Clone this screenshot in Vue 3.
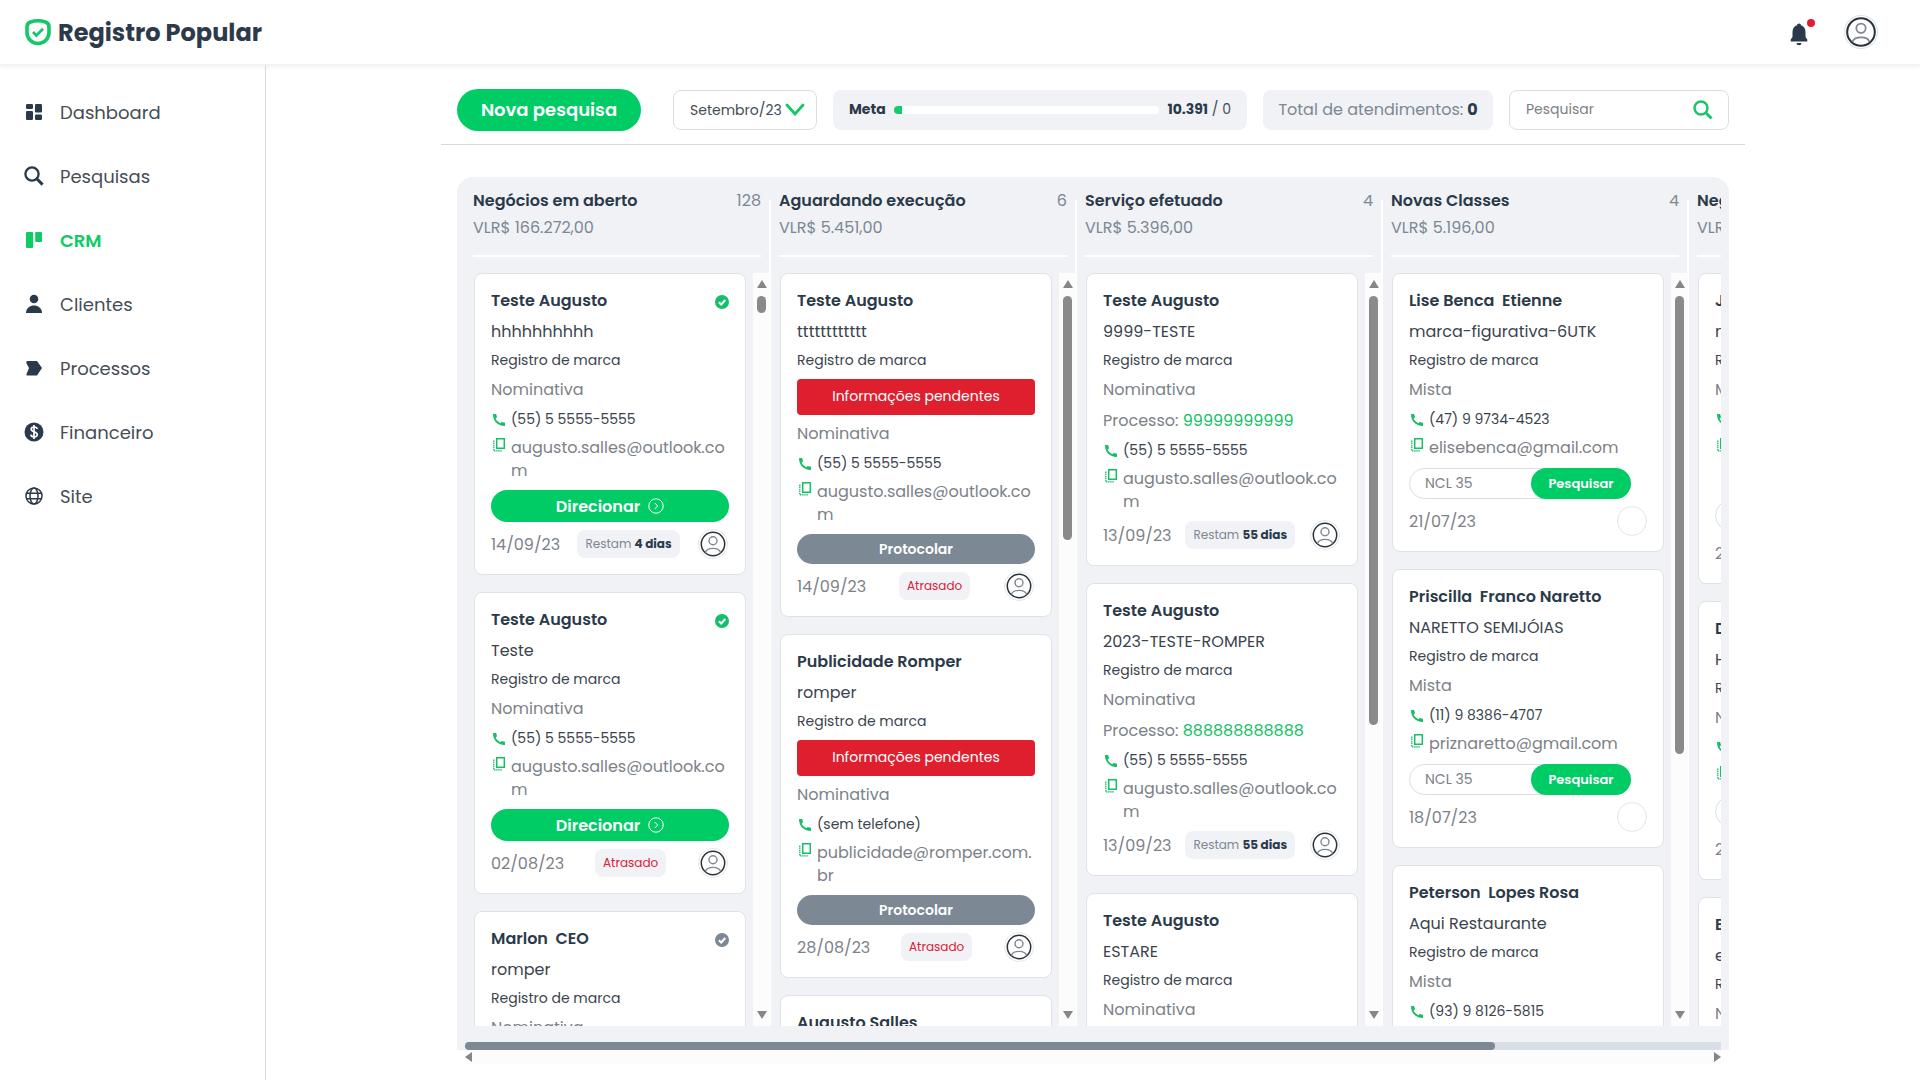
<script setup>
const menu = [
  { label: 'Dashboard', icon: 'dashboard' },
  { label: 'Pesquisas', icon: 'search' },
  { label: 'CRM', icon: 'board', active: true },
  { label: 'Clientes', icon: 'person' },
  { label: 'Processos', icon: 'tag' },
  { label: 'Financeiro', icon: 'money' },
  { label: 'Site', icon: 'globe' }
]

const augusto = { name: 'Teste Augusto', phone: '(55) 5 5555-5555', email: 'augusto.salles@outlook.com', kind: 'Nominativa', avatar: true }

const columns = [
  {
    title: 'Negócios em aberto', count: 128, total: '166.272,00', thumb: 17,
    cards: [
      { ...augusto, brand: 'hhhhhhhhhh', check: 'on', action: 'Direcionar', date: '14/09/23', left: '4 dias' },
      { ...augusto, brand: 'Teste', check: 'on', action: 'Direcionar', date: '02/08/23', late: true },
      { name: 'Marlon\u00a0 CEO', brand: 'romper', check: 'off', kind: 'Nominativa', phone: '', email: '' }
    ]
  },
  {
    title: 'Aguardando execução', count: 6, total: '5.451,00', thumb: 244,
    cards: [
      { ...augusto, brand: 'tttttttttttt', pending: true, action: 'Protocolar', date: '14/09/23', late: true },
      { ...augusto, name: 'Publicidade Romper', brand: 'romper', pending: true, phone: '(sem telefone)', email: 'publicidade@romper.com.br', action: 'Protocolar', date: '28/08/23', late: true },
      { name: 'Augusto Salles', brand: '', kind: '', phone: '', email: '' }
    ]
  },
  {
    title: 'Serviço efetuado', count: 4, total: '5.396,00', thumb: 429,
    cards: [
      { ...augusto, brand: '9999-TESTE', process: '99999999999', date: '13/09/23', left: '55 dias' },
      { ...augusto, brand: '2023-TESTE-ROMPER', process: '888888888888', date: '13/09/23', left: '55 dias' },
      { ...augusto, brand: 'ESTARE', date: '' }
    ]
  },
  {
    title: 'Novas Classes', count: 4, total: '5.196,00', thumb: 458,
    cards: [
      { name: 'Lise Benca\u00a0 Etienne', brand: 'marca-figurativa-6UTK', kind: 'Mista', phone: '(47) 9 9734-4523', email: 'elisebenca@gmail.com', ncl: 'NCL 35', date: '21/07/23' },
      { name: 'Priscilla\u00a0 Franco Naretto', brand: 'NARETTO SEMIJÓIAS', kind: 'Mista', phone: '(11) 9 8386-4707', email: 'priznaretto@gmail.com', ncl: 'NCL 35', date: '18/07/23' },
      { name: 'Peterson\u00a0 Lopes Rosa', brand: 'Aqui Restaurante', kind: 'Mista', phone: '(93) 9 8126-5815', email: '', ncl: 'NCL 35', date: '' }
    ]
  },
  {
    title: 'Negócios', count: '', total: '', thumb: 0,
    cards: [
      { name: 'J', brand: 'm', kind: 'Mista', phone: '', email: '', ncl: '', tall: true, date: '2' },
      { name: 'D', brand: 'H', kind: 'Nominativa', phone: '', email: '', ncl: '', date: '2' },
      { name: 'E', brand: 'e', kind: 'Nominativa', phone: '', email: '', ncl: '', date: '' }
    ]
  }
]
</script>

<template>
  <div class="app">
    <header class="topbar">
      <a class="brand" href="#">
        <svg width="28" height="28" viewBox="0 0 28 28" fill="none" aria-hidden="true">
          <path d="M3 9Q3 5 6.500 4Q14 1.500 21.500 4Q25 5 25 9V14.500A11 11 0 0 1 3 14.500Z" stroke="#16c768" stroke-width="3.600" />
          <path d="M9 14l3.400 3.400 6.600-6.600" stroke="#16c768" stroke-width="2.800" />
        </svg>
        <span>Registro Popular</span>
      </a>
      <div class="account">
        <button class="icon-btn bell" aria-label="Notificações">
          <svg width="18" height="23" viewBox="0 0 18 23" fill="#2a3a4a">
            <path d="M9 0.500C10.200 0.500 10.900 1.300 11 2.300C14 3.200 15.500 5.800 15.500 9V14L17.300 16.500V18.500H0.700V16.500L2.500 14V9C2.500 5.800 4 3.200 7 2.300C7.100 1.300 7.800 0.500 9 0.500Z" />
            <path d="M6.500 20h5a2.500 2.200 0 0 1-5 0Z" />
          </svg>
          <i class="dot"></i>
        </button>
        <button class="icon-btn" aria-label="Minha conta">
          <svg width="34" height="34" viewBox="0 0 32 32" fill="none">
            <circle cx="16" cy="16" r="15.500" fill="#fff" stroke="#dfe3e8" />
            <circle cx="16" cy="16" r="13" stroke="#2a333c" stroke-width="1.900" />
            <circle cx="16" cy="12.500" r="4.400" stroke="#7f8790" stroke-width="1.700" />
            <path d="M8 25.500C9.500 19.500 22.500 19.500 24 25.500" stroke="#7f8790" stroke-width="1.700" />
          </svg>
        </button>
      </div>
    </header>

    <div class="body">
      <nav class="sidebar">
        <a v-for="m in menu" :key="m.label" href="#" class="nav-item" :class="{ active: m.active }">
          <svg width="20" height="20" viewBox="0 0 20 20" fill="currentColor" aria-hidden="true">
            <g v-if="m.icon === 'dashboard'">
              <rect x="2" y="2" width="7" height="5" rx="1.200" /><rect x="11" y="2" width="7" height="8.500" rx="1.200" />
              <rect x="2" y="9" width="7" height="9" rx="1.200" /><rect x="11" y="12.500" width="7" height="5.500" rx="1.200" />
            </g>
            <g v-else-if="m.icon === 'search'" fill="none" stroke="currentColor">
              <circle cx="8" cy="8" r="6.600" stroke-width="2.300" /><path d="M12.800 12.800L18.600 18.600" stroke-width="3" />
            </g>
            <g v-else-if="m.icon === 'board'">
              <rect x="2" y="2" width="7.200" height="16" rx="1.200" /><rect x="11.200" y="2" width="6.800" height="10" rx="1.200" />
            </g>
            <g v-else-if="m.icon === 'person'">
              <circle cx="10" cy="5" r="4.300" /><path d="M2 19C2 9 18 9 18 19Z" />
            </g>
            <path v-else-if="m.icon === 'tag'" d="M3.500 3H13L18 10L13 17.500H3.500Q2 17.500 2.500 16L5 10L2.300 5Q2 3 3.500 3Z" />
            <g v-else-if="m.icon === 'money'">
              <circle cx="10" cy="10" r="9.500" />
              <path d="M13.200 7C12.800 4.300 7.200 4.300 7.200 7.200C7.200 10.200 13.300 9.400 13.300 12.700C13.300 15.700 7.200 15.500 6.800 12.700M10 3V17" fill="none" stroke="#fff" stroke-width="1.700" />
            </g>
            <g v-else fill="none" stroke="currentColor" stroke-width="1.500">
              <circle cx="10" cy="10" r="8" /><ellipse cx="10" cy="10" rx="4" ry="8" /><path d="M2.500 7.300H17.500M2.500 12.700H17.500" />
            </g>
          </svg>
          <span>{{ m.label }}</span>
        </a>
      </nav>

      <main class="main">
        <div class="toolbar">
          <button class="primary">Nova pesquisa</button>
          <label class="month">
            <select aria-label="Mês"><option>Setembro/23</option></select>
            <svg width="20" height="13" viewBox="0 0 20 13" fill="none" stroke="#16c768" stroke-width="2.800" stroke-linecap="round"><path d="M2 2L10 11L18 2" /></svg>
          </label>
          <div class="goal">
            <b>Meta</b>
            <div class="goal-track"><div class="goal-fill"></div></div>
            <span><b>10.391</b> / 0</span>
          </div>
          <div class="total">Total de atendimentos: <b>0</b></div>
          <div class="search">
            <input type="text" placeholder="Pesquisar" aria-label="Pesquisar" />
            <svg width="20" height="20" viewBox="0 0 20 20" fill="none" stroke="#16c768"><circle cx="8" cy="8" r="6.500" stroke-width="2.400" /><path d="M12.800 12.800L18.500 18.500" stroke-width="3" /></svg>
          </div>
        </div>

        <section class="board">
          <div class="columns">
            <section v-for="col in columns" :key="col.title" class="column">
              <div class="col-head">
                <div class="col-title"><h2>{{ col.title }}</h2><span>{{ col.count }}</span></div>
                <div class="col-total">VLR$ {{ col.total }}</div>
              </div>
              <div class="col-body">
                <div class="cards">
                  <article v-for="(c, i) in col.cards" :key="i" class="card">
                    <div class="card-top">
                      <h3>{{ c.name }}</h3>
                      <svg v-if="c.check" width="14" height="14" viewBox="0 0 14 14" :class="c.check">
                        <circle cx="7" cy="7" r="7" fill="currentColor" /><path d="M3.800 7.200L6.200 9.500L10.300 5" fill="none" stroke="#fff" stroke-width="2" />
                      </svg>
                    </div>
                    <p class="name">{{ c.brand }}</p>
                    <p class="service">Registro de marca</p>
                    <div v-if="c.pending" class="pending">Informações pendentes</div>
                    <p class="kind">{{ c.kind }}</p>
                    <p v-if="c.process" class="kind">Processo: <a href="#">{{ c.process }}</a></p>
                    <p class="phone">
                      <svg width="16" height="16" viewBox="0 0 16 16" fill="#16bf66"><path d="M2.300 2H5.200L6 5.300L4.600 6.700Q6 9.700 9.300 11.300L10.700 10L14 10.800V13.700C14 14 13.800 14 13.500 14C7 14 2 9 2 2.500Q2 2 2.300 2Z" /></svg>
                      <span>{{ c.phone }}</span>
                    </p>
                    <p class="email" :class="{ tall: c.tall }">
                      <svg width="16" height="16" viewBox="0 0 16 16" fill="none" stroke="#16bf66"><path d="M5.700 1.700H13.300V11.300H5.700Z" stroke-width="1.500" /><path d="M2.800 3.500V13.800H11" stroke-width="1.300" stroke-dasharray="1.500 .6" /></svg>
                      <span>{{ c.email }}</span>
                    </p>
                    <button v-if="c.action === 'Direcionar'" class="action go">
                      Direcionar
                      <svg width="16" height="16" viewBox="0 0 16 16" fill="none" stroke="#fff"><circle cx="8" cy="8" r="7.200" /><path d="M6.700 5L9.700 8L6.700 11" /></svg>
                    </button>
                    <button v-else-if="c.action" class="action file">{{ c.action }}</button>
                    <div v-if="c.ncl !== undefined" class="ncl">
                      <input type="text" :placeholder="c.ncl" aria-label="Classe NCL" />
                      <button>Pesquisar</button>
                    </div>
                    <div class="card-foot">
                      <span>{{ c.date }}</span>
                      <small v-if="c.left" class="pill">Restam <b>{{ c.left }}</b></small>
                      <small v-if="c.late" class="pill late">Atrasado</small>
                      <svg v-if="c.avatar" class="avatar" width="32" height="32" viewBox="0 0 32 32" fill="none">
                        <circle cx="16" cy="16" r="14.500" stroke="#e3e7eb" />
                        <circle cx="16" cy="16" r="11.700" stroke="#2a333c" stroke-width="1.500" />
                        <circle cx="16" cy="12.800" r="4" stroke="#7f8790" stroke-width="1.400" />
                        <path d="M8.500 24.500C10 19 22 19 23.500 24.500" stroke="#7f8790" stroke-width="1.400" />
                      </svg>
                      <i v-else class="blank"></i>
                    </div>
                  </article>
                </div>
                <div class="vbar">
                  <i class="up"></i>
                  <i class="vthumb" :style="{ height: col.thumb + 'px' }"></i>
                  <i class="down"></i>
                </div>
              </div>
            </section>
          </div>
          <div class="htrack"><div class="hthumb"></div></div>
        </section>
        <div class="harrows"><i class="prev"></i><i class="next"></i></div>
      </main>
    </div>
  </div>
</template>

<style>
body { margin: 0; background: #fff; overflow: hidden; }
</style>

<style scoped>
* { box-sizing: border-box; }
.app { min-height: 100vh; display: flex; flex-direction: column; font-family: Poppins, Inter, "Noto Sans", sans-serif; color: #2a3a4a; }
h2, h3, p { margin: 0; }
button, input, select { font-family: inherit; }
button { border: 0; padding: 0; cursor: pointer; }
a { text-decoration: none; }

.topbar { height: 65px; display: flex; justify-content: space-between; align-items: center; padding: 0 42px 0 24px; border-bottom: 1px solid #f1f2f3; box-shadow: 0 2px 4px #f1f2f4; }
.brand { display: flex; align-items: center; gap: 6px; color: #2d3a49; font-size: 24px; font-weight: 700; }
.account { display: flex; align-items: center; gap: 36px; }
.icon-btn { background: none; display: flex; }
.bell { position: relative; top: 2px; }
.dot { position: absolute; right: -7px; top: -4px; width: 8px; height: 8px; border-radius: 50%; background: #e01e2d; }

.body { flex: 1; display: flex; }
.sidebar { width: 266px; flex: none; padding: 15px 24px; border-right: 1px solid #d9dcde; }
.nav-item { height: 64px; display: flex; align-items: center; gap: 16px; color: #2a3a4a; font-size: 18px; }
.nav-item span { color: #454d55; }
.nav-item.active, .nav-item.active span { color: #0fcb66; font-weight: 600; }

.main { flex: 1; min-width: 0; max-width: 1352px; margin: 0 auto; padding: 0 24px; }
.toolbar { height: 80px; display: flex; align-items: center; gap: 16px; padding: 10px 16px 0; border-bottom: 1px solid #d6dadd; }
.primary { width: 184px; height: 42px; margin-right: 16px; padding-bottom: 1px; flex: none; border-radius: 21px; background: #00cc66; color: #fff; font-size: 18px; font-weight: 600; }
.month, .search { height: 40px; display: flex; align-items: center; border: 1px solid #dcdfe2; border-radius: 8px; background: #fff; }
.month { width: 144px; padding: 0 11px 0 16px; flex: none; justify-content: space-between; }
.month svg { flex: none; }
.month select { appearance: none; border: 0; padding: 0; background: none; color: #454d55; font-size: 14px; }
.goal { height: 40px; flex: 1; display: flex; align-items: center; gap: 8px; padding: 0 16px; border-radius: 8px; background: #f0f2f5; font-size: 14px; color: #454d55; }
.goal b, .total b { color: #2a3a4a; font-weight: 700; }
.goal-track { flex: 1; height: 8px; border-radius: 4px; background: #fff; overflow: hidden; }
.goal-fill { width: 8px; height: 8px; background: #14cc6c; }
.total { width: 230px; height: 40px; display: flex; align-items: center; justify-content: center; gap: 4px; flex: none; border-radius: 8px; background: #f0f2f5; color: #7c8894; font-size: 16px; white-space: nowrap; }
.search { width: 220px; padding: 0 15px 0 16px; flex: none; }
.search input { flex: 1; min-width: 0; border: 0; padding: 0; outline: 0; font-size: 14px; }
.search input::placeholder { color: #7c8084; }

.board { margin: 32px 16px 0; padding: 11px 8px 0; border-radius: 16px 16px 0 0; background: #f0f2f5; }
.columns { display: flex; overflow: hidden; }
.column { width: 306px; flex: none; background: linear-gradient(#fff, #fff) 304px 12px / 3px 100% no-repeat; }
.col-head { height: 69px; margin: 0 10px 16px 8px; padding-top: 1px; border-bottom: 2px solid #fff; color: #7c8894; font-size: 16px; line-height: 24px; }
.col-title { display: flex; justify-content: space-between; height: 27px; }
.col-title h2 { color: #2a3a4a; font-size: 16px; font-weight: 600; white-space: nowrap; }
.col-body { height: calc(100vh - 327px); display: flex; overflow: hidden; }
.cards { flex: 1; display: flex; flex-direction: column; gap: 17px; padding: 0 8px 0 9px; min-width: 0; }
.vbar { width: 17px; margin-right: 1px; flex: none; display: flex; flex-direction: column; align-items: center; padding: 7px 0; background: #fcfcfc; }
.up, .down { border: 5px solid transparent; }
.up { border-top: 0; border-bottom: 8px solid #868686; }
.down { margin-top: auto; border-bottom: 0; border-top: 8px solid #868686; }
.vthumb { width: 9px; margin-top: 8px; border-radius: 5px; background: #8a8a8a; }

.card { flex: none; width: 272px; padding: 15px 16px; display: flex; flex-direction: column; gap: 7px; border: 1px solid #dfe2e7; border-radius: 8px; background: #fff; }
.card-top { display: flex; justify-content: space-between; align-items: center; height: 24px; }
.card-top h3 { font-size: 16px; font-weight: 600; line-height: 24px; white-space: nowrap; }
.card-top svg { margin-top: 2px; }
.on { color: #14bf67; }
.off { color: #7c8894; }
.name { height: 24px; font-size: 16px; line-height: 24px; color: #3a444e; white-space: nowrap; }
.service { height: 20px; font-size: 14px; line-height: 18px; color: #3a444e; }
.kind { height: 24px; font-size: 16px; line-height: 24px; color: #7c8288; }
.kind a { color: #16bf66; }
.pending { height: 36px; margin-top: 1px; border-radius: 4px; background: #e01f2e; color: #fff; font-size: 14px; line-height: 34px; text-align: center; }
.phone, .email { display: flex; gap: 4px; }
.phone { height: 20px; font-size: 14px; line-height: 20px; color: #3a444e; }
.phone svg { margin-top: 3px; flex: none; }
.email { min-height: 23px; font-size: 16px; line-height: 23px; color: #7c8288; }
.email svg { flex: none; margin-top: 1px; }
.email span { word-break: break-all; }
.email.tall { min-height: 55px; }
.action { display: flex; align-items: center; justify-content: center; gap: 8px; margin-top: 1px; border-radius: 16px; color: #fff; font-weight: 600; }
.go { height: 32px; background: #00cc66; font-size: 16px; }
.file { height: 30px; background: #7c8894; font-size: 14px; }
.ncl { width: 222px; height: 31px; margin-top: 2px; display: flex; border: 1px solid #dcdfe2; border-radius: 16px; }
.ncl input { flex: 1; min-width: 0; border: 0; padding: 0 0 0 15px; background: none; font-size: 14px; outline: 0; }
.ncl input::placeholder { color: #7c8288; }
.ncl button { width: 100px; height: 31px; margin: -1px; border-radius: 16px; background: #00cc66; color: #fff; font-size: 13px; font-weight: 600; }
.card-foot { height: 30px; display: flex; align-items: center; justify-content: space-between; color: #7c8288; font-size: 16px; }
.avatar { flex: none; }
.blank { width: 30px; height: 30px; border: 1px solid #e8e4ea; border-radius: 50%; }
.pill { height: 28px; padding: 0 8px; border-radius: 8px; background: #f0f2f5; color: #7c8894; font-size: 12px; line-height: 28px; }
.pill b { color: #2a3a4a; font-weight: 700; }
.late { color: #dc2036; }

.htrack { margin-top: 16px; height: 8px; background: #d9dfe7; border-radius: 4px 0 0 4px; }
.hthumb { width: 82%; height: 8px; border-radius: 4px; background: #7c8894; }
.harrows { height: 14px; margin: 0 24px; display: flex; justify-content: space-between; align-items: center; background: #fcfcfc; }
.prev, .next { border: 5px solid transparent; }
.prev { border-left: 0; border-right: 7px solid #868686; }
.next { border-right: 0; border-left: 7px solid #868686; }
</style>
